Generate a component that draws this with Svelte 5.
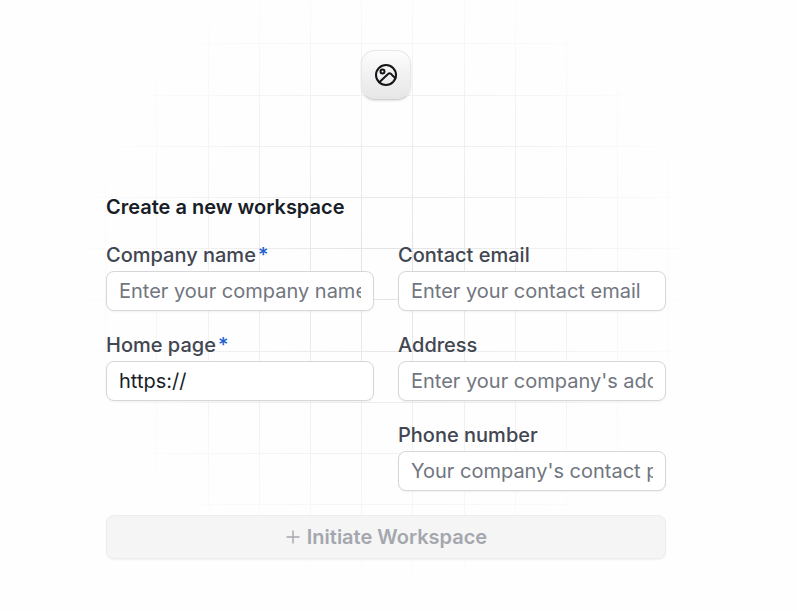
<script lang="ts">
  let companyName = $state('');
  let homePage = $state('https://');
  let contactEmail = $state('');
  let address = $state('');
  let phone = $state('');

  const cells = 13;
  const gridSize = 668;
  // evenly spaced lines, snapped to whole pixels
  const lines = Array.from({ length: cells }, (_, i) => Math.round(2 + i * 51.2));

  let canSubmit = $derived(companyName.trim() !== '' && homePage.trim().length > 'https://'.length);

  function handleSubmit(e: SubmitEvent) {
    e.preventDefault();
  }
</script>

<main class="page">
  <div class="content">
    <header class="hero">
      <svg class="grid-pattern" width={gridSize} height={gridSize} viewBox="0 0 {gridSize} {gridSize}" aria-hidden="true">
        <defs>
          <radialGradient id="fade" r="0.48">
            <stop offset="0" stop-color="#fff" />
            <stop offset="1" stop-color="#fff" stop-opacity="0" />
          </radialGradient>
          <mask id="grid-mask">
            <rect width={gridSize} height={gridSize} fill="url(#fade)" />
          </mask>
        </defs>
        <g mask="url(#grid-mask)" fill="#e0e1e3">
          {#each lines as pos}
            <rect x={pos} y="0" width="1" height={gridSize} />
            <rect x="0" y={pos} width={gridSize} height="1" />
          {/each}
        </g>
      </svg>
      <div class="icon-box">
        <svg width="24" height="24" viewBox="0 0 24 24" fill="none" stroke="currentColor" stroke-width="2" stroke-linecap="round" stroke-linejoin="round" aria-hidden="true">
          <circle cx="12" cy="12" r="10" />
          <circle cx="8.5" cy="8.5" r="2" />
          <path d="M5.3 19.2l8.5-7.9c.8-.7 1.2-1.1 1.7-1.1.4 0 .8.1 1.2.4.3.2.6.5 1.1 1.1l3.7 3.7" />
        </svg>
      </div>
    </header>

    <form onsubmit={handleSubmit}>
      <h1>Create a new workspace</h1>

      <div class="fields">
        <div class="column">
          <div class="field">
            <label for="company">Company name<span class="required">*</span></label>
            <input id="company" type="text" placeholder="Enter your company name" bind:value={companyName} />
          </div>
          <div class="field">
            <label for="homepage">Home page<span class="required">*</span></label>
            <input id="homepage" type="text" bind:value={homePage} />
          </div>
        </div>

        <div class="column">
          <div class="field">
            <label for="email">Contact email</label>
            <input id="email" type="email" placeholder="Enter your contact email" bind:value={contactEmail} />
          </div>
          <div class="field">
            <label for="address">Address</label>
            <input id="address" type="text" placeholder="Enter your company's address" bind:value={address} />
          </div>
          <div class="field">
            <label for="phone">Phone number</label>
            <input id="phone" type="tel" placeholder="Your company's contact phone" bind:value={phone} />
          </div>
        </div>
      </div>

      <button type="submit" disabled={!canSubmit}>
        <svg width="16" height="16" viewBox="0 0 16 16" fill="none" stroke="currentColor" stroke-width="1.4" aria-hidden="true">
          <path d="M8 1.5v13M1.5 8h13" />
        </svg>
        Initiate Workspace
      </button>
    </form>
  </div>
</main>

<style>
  :global(body) {
    margin: 0;
    background: #fefefe;
  }

  .page {
    box-sizing: border-box;
    min-height: 100vh;
    padding: 50px 25px 50px 0;
    overflow: hidden;
    font-family: Inter, 'Liberation Sans', sans-serif;
    font-size: 20px;
    line-height: 24px;
    color: #181d27;
  }

  .content {
    max-width: 560px;
    margin: 0 auto;
  }

  .hero {
    position: relative;
    display: flex;
    justify-content: center;
    margin-bottom: 95px;
  }

  .grid-pattern {
    position: absolute;
    top: -111px;
    left: 50%;
    transform: translateX(-50%);
    pointer-events: none;
  }

  .icon-box {
    position: relative;
    box-sizing: border-box;
    display: flex;
    align-items: center;
    justify-content: center;
    width: 50px;
    height: 50px;
    border: 1px solid #e8e8e9;
    border-bottom-color: #d0d0d2;
    border-radius: 14px;
    background: linear-gradient(#fdfdfd, #e6e6e6);
    box-shadow: 0 1px 2px rgba(10, 13, 18, 0.12);
    color: #141518;
  }

  form {
    position: relative;
  }

  h1 {
    margin: 0 0 24px;
    font-size: 20px;
    font-weight: 600;
    line-height: 24px;
  }

  .fields {
    display: grid;
    grid-template-columns: 1fr 1fr;
    gap: 24px;
    margin-bottom: 24px;
  }

  .column {
    display: flex;
    flex-direction: column;
    gap: 22px;
    min-width: 0;
  }

  .field {
    display: flex;
    flex-direction: column;
    gap: 4px;
  }

  label {
    font-weight: 500;
    color: #414651;
  }

  .required {
    margin-left: 2px;
    color: #1f62d4;
  }

  input {
    box-sizing: border-box;
    width: 100%;
    height: 40px;
    padding: 0 12px;
    border: 1px solid #d5d7da;
    border-radius: 8px;
    background: #fff;
    box-shadow: 0 1px 2px rgba(10, 13, 18, 0.05);
    font: inherit;
    color: #181d27;
    outline: none;
  }

  input::placeholder {
    color: #717680;
    opacity: 1;
  }

  input:focus {
    border-color: #1f62d4;
  }

  button {
    display: flex;
    align-items: center;
    justify-content: center;
    gap: 6px;
    width: 100%;
    height: 44px;
    border: 1px solid #1f62d4;
    border-radius: 8px;
    background: #1f62d4;
    box-shadow: 0 1px 2px rgba(10, 13, 18, 0.05);
    font: inherit;
    font-weight: 600;
    color: #fff;
    cursor: pointer;
  }

  button:disabled {
    border-color: #ededee;
    background: #f5f5f5;
    color: #a4a7ae;
    cursor: default;
  }
</style>
